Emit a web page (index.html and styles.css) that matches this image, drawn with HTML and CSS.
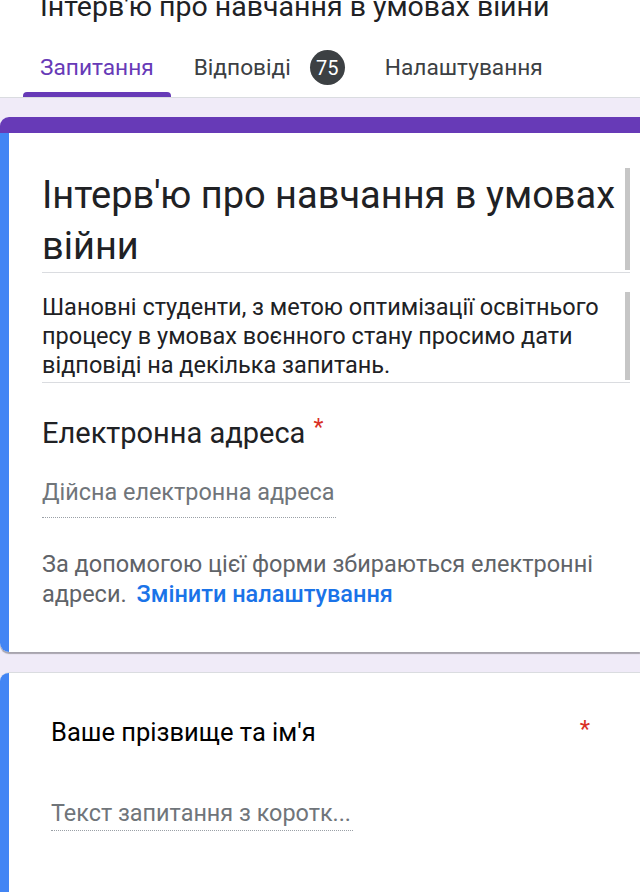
FILE: index.html
```html
<!DOCTYPE html>
<html lang="uk">
<head>
    <meta charset="UTF-8">
    <meta name="viewport" content="width=device-width, initial-scale=1.0">
    <title>Інтерв'ю про навчання в умовах війни</title>
    <link rel="stylesheet" href="styles.css">
</head>
<body>
    <!-- Top bar -->
    <header class="topbar">
        <h1 class="doc-title">Інтерв'ю про навчання в умовах війни</h1>

        <nav class="tabs">
            <div class="tab active">
                <span class="tab-label">Запитання</span>
                <span class="tab-bar"></span>
            </div>
            <div class="tab">
                <span class="tab-label">Відповіді <span class="badge">75</span></span>
                <span class="tab-bar"></span>
            </div>
            <div class="tab">
                <span class="tab-label">Налаштування</span>
                <span class="tab-bar"></span>
            </div>
        </nav>
    </header>

    <main class="editor">
        <!-- Title card -->
        <section class="card card-title">
            <div class="card-top"></div>
            <div class="card-body">
                <div class="field field-title">
                    <div class="field-text">Інтерв'ю про навчання в умовах війни</div>
                    <div class="scrollbar"></div>
                </div>

                <div class="field field-desc">
                    <div class="field-text">Шановні студенти, з метою оптимізації освітнього процесу в умовах воєнного стану просимо дати відповіді на декілька запитань.</div>
                    <div class="scrollbar"></div>
                </div>

                <h2 class="email-label">Електронна адреса<span class="req">*</span></h2>
                <div class="answer answer-email">Дійсна електронна адреса</div>

                <p class="note">За допомогою цієї форми збираються електронні адреси. <a href="#" class="link">Змінити налаштування</a></p>
            </div>
        </section>

        <!-- Question card -->
        <section class="card card-question">
            <div class="card-body">
                <div class="question-head">
                    <h3 class="question-title">Ваше прізвище та ім'я</h3>
                    <span class="req">*</span>
                </div>
                <div class="answer answer-short">Текст запитання з коротк...</div>
            </div>
        </section>
    </main>
</body>
</html>
```

FILE: styles.css
```css
body {
    font-family: Roboto, 'Noto Sans', Arial, sans-serif;
    background-color: #f0ebf8;
    margin: 0;
    width: 640px;
    height: 892px;
    overflow: hidden;
    color: #202124;
}

/* header */
.topbar {
    background: white;
}

.doc-title {
    margin: -7px 0 0 40px;
    font-size: 28.5px;
    font-weight: 400;
    line-height: 28px;
    white-space: nowrap;
    color: #202124;
}

.tabs {
    display: flex;
    gap: 6px;
    margin-top: 22px;
    padding-left: 23px;
    height: 54px;
    border-bottom: 1px solid #dadce0;
}

.tab {
    display: flex;
    flex-direction: column;
}

.tab-label {
    flex: 1;
    display: flex;
    align-items: center;
    padding: 0 17px;
    font-size: 22.7px;
    color: #3c4043;
    white-space: nowrap;
}

.tab-bar {
    height: 5px;
    border-radius: 4px 4px 0 0;
}

.tab.active .tab-label {
    color: #673ab7;
}

.tab.active .tab-bar {
    background: #673ab7;
}

.badge {
    display: inline-flex;
    align-items: center;
    justify-content: center;
    width: 35px;
    height: 35px;
    margin-left: 19px;
    border-radius: 50%;
    background: #3c4043;
    color: white;
    font-size: 20px;
}

/* cards */
.editor {
    padding-top: 19px;
}

.card {
    background: white;
    border-radius: 9px 0 0 9px;
    overflow: hidden;
}

.card-top {
    height: 16px;
    background: #673ab7;
}

.card-body {
    border-left: 9px solid #4285f4;
}

.card-title {
    box-shadow: 0 2px 1px rgba(0, 0, 0, 0.3);
}

.card-title .card-body {
    padding: 35px 10px 43px 33px;
}

.field {
    display: flex;
    border-bottom: 1px solid #dadce0;
}

.field-text {
    flex: 1;
}

.scrollbar {
    width: 5px;
    background: #c6c6c6;
    margin-bottom: 2px;
}

.field-title .field-text {
    padding-top: 2px;
    font-size: 38px;
    line-height: 51px;
}

.field-desc {
    margin-top: 19px;
}

.field-desc .field-text {
    padding: 1px 8px 2px 0;
    font-size: 23.5px;
    line-height: 29px;
}

.email-label {
    margin: 33px 0 0;
    font-size: 29px;
    line-height: 34px;
    font-weight: 400;
    color: #202124;
}

.req {
    color: #d93025;
}

.email-label .req {
    margin-left: 8px;
    font-size: 23px;
    line-height: 1;
    vertical-align: top;
}

.answer {
    font-size: 23.4px;
    line-height: 26px;
    color: #70757a;
    border-bottom: 1px dotted #9aa0a6;
}

.answer-email {
    width: 294px;
    margin-top: 29px;
    padding-bottom: 12px;
}

.note {
    margin: 31px 0 0;
    font-size: 23.5px;
    line-height: 30px;
    color: #5f6368;
}

.link {
    margin-left: 4px;
    color: #1a73e8;
    text-decoration: none;
    font-weight: 500;
}

/* question card */
.card-question {
    margin-top: 20px;
    border-top: 1px solid #dadce0;
    height: 260px;
}

.card-question .card-body {
    height: 100%;
    padding: 44px 0 0 42px;
}

.question-head {
    display: flex;
    justify-content: space-between;
    padding-right: 50px;
}

.question-title {
    margin: 0;
    font-size: 25.5px;
    font-weight: 400;
    color: #000;
}

.question-head .req {
    font-size: 24px;
    line-height: 1;
}

.answer-short {
    width: 302px;
    margin-top: 53px;
    padding-bottom: 4px;
}
```
